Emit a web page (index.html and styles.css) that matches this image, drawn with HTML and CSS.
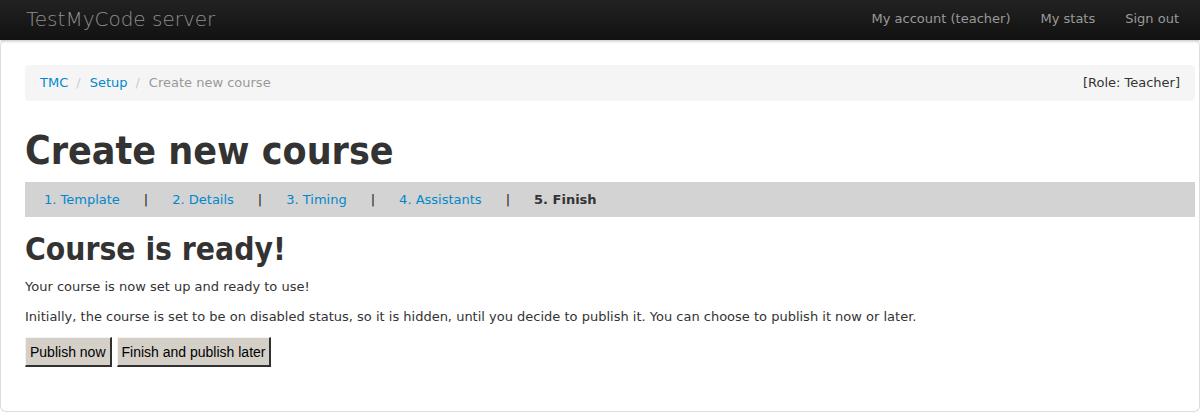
FILE: index.html
```html
<!DOCTYPE html>
<html>
<head>
<meta charset="utf-8">
<link rel="stylesheet" href="styles.css">
</head>
<body>
<div class="navbar">
  <a class="brand" href="#">TestMyCode server</a>
  <ul class="nav">
    <li><a href="#">My account (teacher)</a></li>
    <li><a href="#">My stats</a></li>
    <li><a href="#">Sign out</a></li>
  </ul>
</div>
<div class="container">
  <div class="breadcrumb">
    <ul class="crumbs">
      <li><a href="#">TMC</a></li>
      <li class="sep">/</li>
      <li><a href="#">Setup</a></li>
      <li class="sep">/</li>
      <li class="active">Create new course</li>
    </ul>
    <span class="role">[Role: Teacher]</span>
  </div>
  <h1 class="title">Create new course</h1>
  <div class="steps">
    <a href="#">1. Template</a><span class="bar">|</span>
    <a href="#">2. Details</a><span class="bar">|</span>
    <a href="#">3. Timing</a><span class="bar">|</span>
    <a href="#">4. Assistants</a><span class="bar">|</span>
    <b class="current">5. Finish</b>
  </div>
  <h2 class="subtitle">Course is ready!</h2>
  <p class="text">Your course is now set up and ready to use!</p>
  <p class="text">Initially, the course is set to be on disabled status, so it is hidden, until you decide to publish it. You can choose to publish it now or later.</p>
  <div class="buttons">
    <button class="btn">Publish now</button>
    <button class="btn">Finish and publish later</button>
  </div>
</div>
</body>
</html>
```
FILE: styles.css
```css
* { box-sizing: border-box; }
html, body { margin: 0; padding: 0; background: #fff; }
body {
  font-family: "DejaVu Sans", sans-serif;
  font-size: 13px;
  line-height: 20px;
  color: #333;
}
a { color: #0088cc; text-decoration: none; }
.navbar {
  height: 40px;
  background: linear-gradient(to bottom, #222222, #111111);
  display: flex;
  align-items: center;
  justify-content: space-between;
  padding: 0 6px 0 26px;
  box-shadow: 0 1px 3px rgba(0,0,0,0.25);
  position: relative;
  z-index: 1;
}
.brand {
  color: #8f8f8f;
  font-size: 20px;
  font-weight: 300;
  font-family: "DejaVu Sans", sans-serif;
  margin-top: -2px;
}
.nav { list-style: none; margin: 0; padding: 0; display: flex; }
.nav a { color: #999; display: block; padding: 9px 15px 11px; font-size: 13px; }
.container {
  border: 1px solid #ddd;
  border-top: none;
  border-radius: 6px;
  height: 372px;
  padding: 25px 4px 0 24px;
}
.breadcrumb {
  background: #f5f5f5;
  border-radius: 4px;
  height: 36px;
  padding: 0 15px;
  display: flex;
  align-items: center;
  justify-content: space-between;
  margin: 0 0 25px;
}
.crumbs { list-style: none; margin: 0; padding: 0; display: flex; }
.crumbs .sep { color: #ccc; padding: 0 9px 0 8px; }
.crumbs .active { color: #999; }
.role { color: #333; }
.title {
  font-family: "DejaVu Sans", sans-serif;
  font-stretch: condensed;
  font-size: 39px;
  line-height: 40px;
  font-weight: bold;
  margin: 0 0 11px;
  padding-top: 5px;
  color: #333;
}
.steps {
  background: #d3d3d3;
  height: 35px;
  display: flex;
  align-items: center;
  padding: 0 19px;
}
.steps .bar { color: #222; margin: 0 24px 0 24px; }
.steps .current { color: #333; }
.subtitle {
  font-family: "DejaVu Sans", sans-serif;
  font-stretch: condensed;
  font-size: 31.5px;
  line-height: 40px;
  margin: 12px 0 8px;
  color: #333;
}
.text { margin: 0 0 10px; }
.buttons { display: flex; gap: 5px; margin-top: 6px; }
.btn {
  font-family: "Liberation Sans", Arial, sans-serif;
  font-size: 14px;
  color: #000;
  background: #d4d0c8;
  border: 2px solid;
  border-color: #f4f3ef #303030 #303030 #f4f3ef;
  border-width: 1px 2px 2px 1px;
  height: 30px;
  padding: 0 4px;
}
```
